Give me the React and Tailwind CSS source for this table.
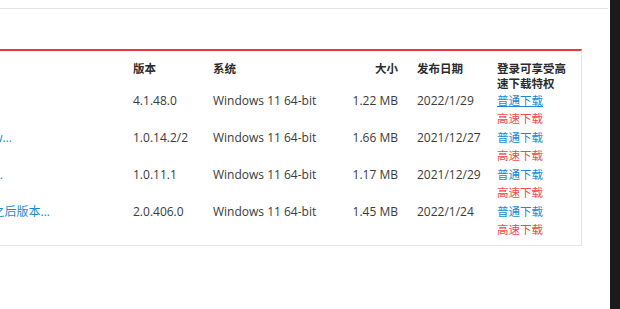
import React from 'react';

const rows = [
  { name: '', nameEnd: 'w-0', version: '4.1.48.0', size: '1.22 MB', date: '2022/1/29', hover: true },
  { name: 'Windows Subsystem for Android Preview...', nameEnd: 'w-[12px]', version: '1.0.14.2/2', size: '1.66 MB', date: '2021/12/27' },
  { name: 'PowerToys 实用工具集合...', nameEnd: 'w-[3px]', version: '1.0.11.1', size: '1.17 MB', date: '2021/12/29' },
  { name: 'Windows 10 1809 及之后版本...', nameEnd: 'w-[50px]', version: '2.0.406.0', size: '1.45 MB', date: '2022/1/24' },
];

export default function App() {
  return (
    <div className="h-[309px] w-[620px] overflow-hidden bg-white font-['Open_Sans','Noto_Sans_CJK_SC',sans-serif] text-[12px] text-[#333]">
      <div className="flex h-full">
        <div className="flex-1">
          <div className="mr-[2px] h-[9px] border-b border-[#e2e2e2]" />

          <div className="mt-[40px] w-[582px] border-t-2 border-r border-b border-[#e6e6e6] border-t-[#e8383d] pb-[6px]">
            <div className="flex pt-[10px] font-bold text-[11.5px] leading-[15px] text-[#2b2b2b]">
              <div className="w-[133px] shrink-0" />
              <div className="w-[80px] shrink-0">版本</div>
              <div className="w-[120px] shrink-0">系统</div>
              <div className="w-[65px] shrink-0 text-right">大小</div>
              <div className="w-[99px] shrink-0 pl-[19px]">发布日期</div>
              <div className="w-[70px]">登录可享受高速下载特权</div>
            </div>

            {rows.map((row) => (
              <div key={row.version} className="flex pt-[1px] leading-[18px] text-[#3a3a3a]">
                <div className="w-[133px] shrink-0">
                  {row.name && (
                    <div className={`flex justify-end whitespace-nowrap text-[#1a8ad4] ${row.nameEnd}`}>
                      <span>{row.name}</span>
                    </div>
                  )}
                </div>
                <div className="w-[80px] shrink-0">{row.version}</div>
                <div className="w-[120px] shrink-0">Windows 11 64-bit</div>
                <div className="w-[65px] shrink-0 text-right">{row.size}</div>
                <div className="w-[99px] shrink-0 pl-[19px]">{row.date}</div>
                <div className="flex flex-col items-start text-[11.5px]">
                  <a className={`text-[#1a8ad4] ${row.hover ? 'underline' : ''}`}>普通下载</a>
                  <a className="text-[#ee4b4b]">高速下载</a>
                </div>
              </div>
            ))}
          </div>
        </div>
        <div className="w-[10px] bg-[#1b1b1b]" />
      </div>
    </div>
  );
}
